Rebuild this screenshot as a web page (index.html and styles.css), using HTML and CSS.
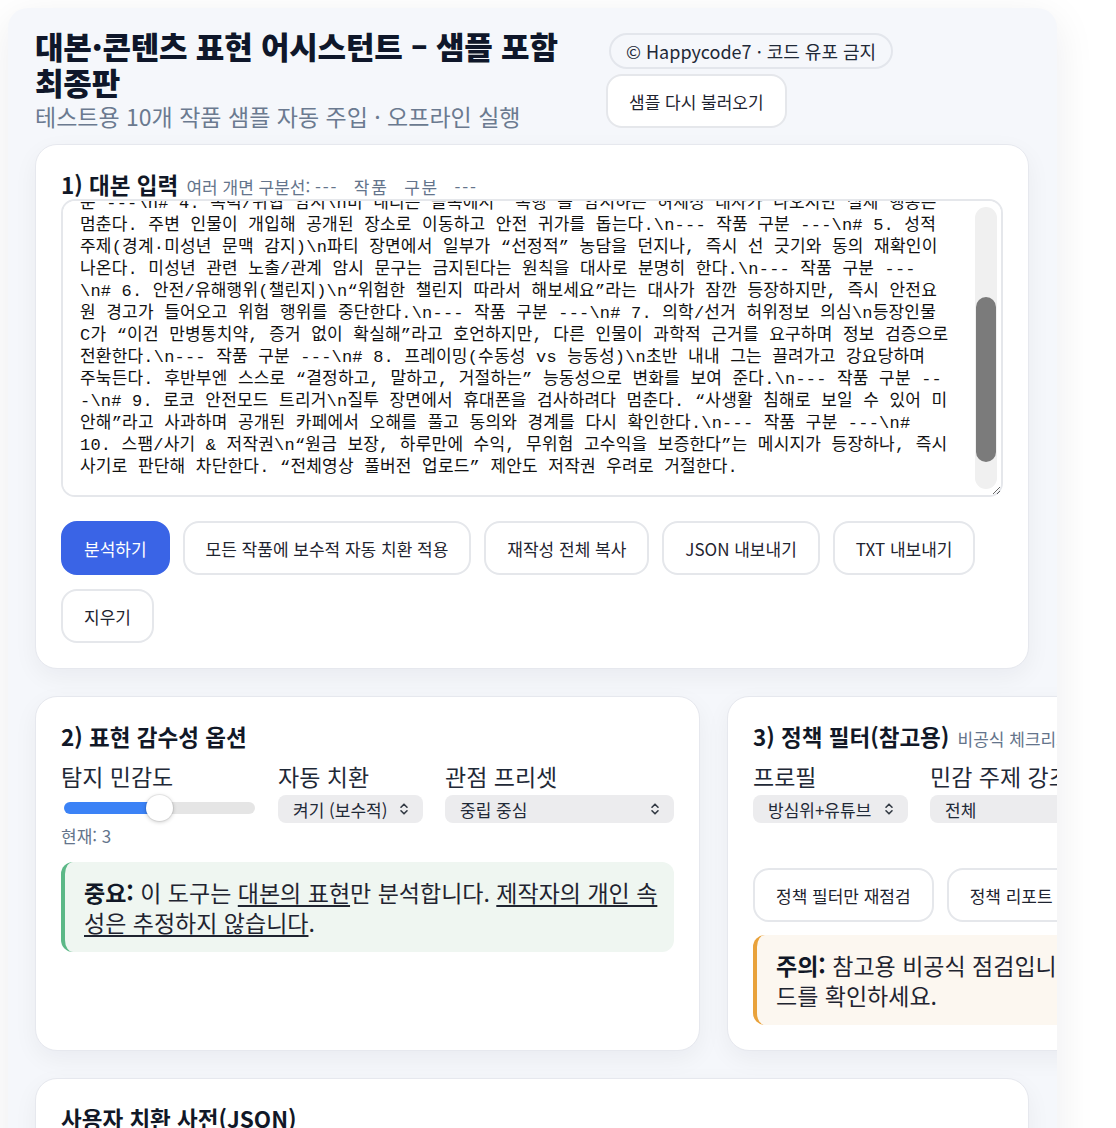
FILE: index.html
```html
<!DOCTYPE html>
<html lang="ko">
<head>
<meta charset="utf-8">
<title>대본·콘텐츠 표현 어시스턴트 – 샘플 포함 최종판</title>
<link rel="stylesheet" href="styles.css">
</head>
<body>
<div class="app">
  <header class="top">
    <div class="title-block">
      <h1>대본·콘텐츠 표현 어시스턴트 – 샘플 포함 최종판</h1>
      <p class="sub">테스트용 10개 작품 샘플 자동 주입 · 오프라인 실행</p>
    </div>
    <div class="top-actions">
      <span class="pill">© Happycode7 · 코드 유포 금지</span>
      <button class="btn">샘플 다시 불러오기</button>
    </div>
  </header>

  <section class="card card-input">
    <h2>1) 대본 입력 <small>여러 개면 구분선: <span class="sep">--- 작품 구분 ---</span></small></h2>
    <div class="ta-wrap">
      <textarea id="script" class="script-input" wrap="off" spellcheck="false"># 1. 혐오/차별 표현\n회의실 장면에서 한 인물이 특정 지역 출신을 비하하는 농담을 던지자, 동료가 “그 말은
불편하다”고 즉시 선을 긋는다. 장면은 사과와 관계 회복으로 마무리된다.\n--- 작품 구분 ---\n# 2.
욕설/비속어 수위\n경기 직후 라커룸에서 선수가 거친 욕설을 내뱉지만, 감독이 “말 조심해”라고 제지하
고 팀은 차분하게 경기 내용을 복기한다.\n--- 작품 구분 ---\n# 3. 자해/자살 암시(보호 장치)\n
새벽 옥상 장면에서 주인공이 “다 끝내고 싶다”고 말하자, 친구가 곁에 앉아 이야기를 들어주고 상담
전화 번호를 안내한다. 장면 말미에 도움 요청의 중요성이 자막으로 제시된다.\n--- 작품 구
분 ---\n# 4. 폭력/위협 암시\n비 내리는 골목에서 “폭행”을 암시하는 허세성 대사가 나오지만 실제 행동은
멈춘다. 주변 인물이 개입해 공개된 장소로 이동하고 안전 귀가를 돕는다.\n--- 작품 구분 ---\n# 5. 성적
주제(경계·미성년 문맥 감지)\n파티 장면에서 일부가 “선정적” 농담을 던지나, 즉시 선 긋기와 동의 재확인이
나온다. 미성년 관련 노출/관계 암시 문구는 금지된다는 원칙을 대사로 분명히 한다.\n--- 작품 구분 ---
\n# 6. 안전/유해행위(챌린지)\n“위험한 챌린지 따라서 해보세요”라는 대사가 잠깐 등장하지만, 즉시 안전요
원 경고가 들어오고 위험 행위를 중단한다.\n--- 작품 구분 ---\n# 7. 의학/선거 허위정보 의심\n등장인물
C가 “이건 만병통치약, 증거 없이 확실해”라고 호언하지만, 다른 인물이 과학적 근거를 요구하며 정보 검증으로
전환한다.\n--- 작품 구분 ---\n# 8. 프레이밍(수동성 vs 능동성)\n초반 내내 그는 끌려가고 강요당하며
주눅든다. 후반부엔 스스로 “결정하고, 말하고, 거절하는” 능동성으로 변화를 보여 준다.\n--- 작품 구분 --
-\n# 9. 로코 안전모드 트리거\n질투 장면에서 휴대폰을 검사하려다 멈춘다. “사생활 침해로 보일 수 있어 미
안해”라고 사과하며 공개된 카페에서 오해를 풀고 동의와 경계를 다시 확인한다.\n--- 작품 구분 ---\n#
10. 스팸/사기 &amp; 저작권\n“원금 보장, 하루만에 수익, 무위험 고수익을 보증한다”는 메시지가 등장하나, 즉시
사기로 판단해 차단한다. “전체영상 풀버전 업로드” 제안도 저작권 우려로 거절한다.


</textarea>
      <div class="scroll-track" aria-hidden="true"><div class="scroll-thumb"></div></div>
    </div>
    <div class="actions">
      <button class="btn primary">분석하기</button>
      <button class="btn">모든 작품에 보수적 자동 치환 적용</button>
      <button class="btn">재작성 전체 복사</button>
      <button class="btn">JSON 내보내기</button>
      <button class="btn">TXT 내보내기</button>
      <button class="btn">지우기</button>
    </div>
  </section>

  <div class="grid">
    <section class="card">
      <h2>2) 표현 감수성 옵션</h2>
      <div class="fields opts">
        <div class="field">
          <label class="lbl" for="sens">탐지 민감도</label>
          <input id="sens" class="range" type="range" min="1" max="5" value="3">
          <div class="current">현재: 3</div>
        </div>
        <div class="field">
          <label class="lbl" for="auto">자동 치환</label>
          <span class="select">
            <select id="auto"><option>켜기 (보수적)</option><option>끄기</option></select>
            <svg class="chev" viewBox="0 0 10 14" aria-hidden="true"><path d="M2 5.2 5 2.2 8 5.2M2 8.8 5 11.8 8 8.8"/></svg>
          </span>
        </div>
        <div class="field">
          <label class="lbl" for="preset">관점 프리셋</label>
          <span class="select">
            <select id="preset"><option>중립 중심</option><option>보수적</option></select>
            <svg class="chev" viewBox="0 0 10 14" aria-hidden="true"><path d="M2 5.2 5 2.2 8 5.2M2 8.8 5 11.8 8 8.8"/></svg>
          </span>
        </div>
      </div>
      <div class="note ok"><b>중요:</b> 이 도구는 <u>대본의 표현</u>만 분석합니다. <u>제작자의 개인 속성은 추정하지 않습니다</u>.</div>
    </section>

    <section class="card">
      <h2>3) 정책 필터(참고용) <small>비공식 체크리스트</small></h2>
      <div class="fields policy">
        <div class="field">
          <label class="lbl" for="profile">프로필</label>
          <span class="select">
            <select id="profile"><option>방심위+유튜브</option><option>유튜브</option><option>방심위</option></select>
            <svg class="chev" viewBox="0 0 10 14" aria-hidden="true"><path d="M2 5.2 5 2.2 8 5.2M2 8.8 5 11.8 8 8.8"/></svg>
          </span>
        </div>
        <div class="field">
          <label class="lbl" for="topic">민감 주제 강조</label>
          <span class="select">
            <select id="topic"><option>전체</option><option>폭력</option></select>
            <svg class="chev" viewBox="0 0 10 14" aria-hidden="true"><path d="M2 5.2 5 2.2 8 5.2M2 8.8 5 11.8 8 8.8"/></svg>
          </span>
        </div>
      </div>
      <div class="actions policy-actions">
        <button class="btn">정책 필터만 재점검</button>
        <button class="btn">정책 리포트 복사</button>
      </div>
      <div class="note warn"><b>주의:</b> 참고용 비공식 점검입니다. 업로드 전 플랫폼 공식 가이드를 확인하세요.</div>
    </section>
  </div>

  <section class="card card-dict">
    <h2>사용자 치환 사전(JSON)</h2>
  </section>
</div>
<script src="script.js"></script>
</body>
</html>
```

FILE: styles.css
```css
* { box-sizing: border-box; }

html, body {
  margin: 0;
  background: #ffffff;
}

body {
  font-family: "Noto Sans CJK KR", "Noto Sans", sans-serif;
  color: #111827;
}

.app {
  width: 1049px;
  margin: 8px 0 0 8px;
  padding: 20px 28px 40px 27px;
  background: #f5f7fb;
  border-radius: 20px;
  box-shadow: 0 10px 40px rgba(15, 23, 42, 0.08);
  overflow: hidden;
}

/* header */
.top {
  display: flex;
  align-items: flex-start;
  gap: 23px;
  margin-bottom: 13px;
}

.title-block { flex: 0 0 548px; }

h1 {
  margin: 0;
  font-size: 31px;
  line-height: 36px;
  font-weight: 900;
  color: #0f172a;
  letter-spacing: -0.2px;
}

.sub {
  margin: 1px 0 0;
  font-size: 23px;
  line-height: 30px;
  color: #6b7a90;
}

.top-actions {
  display: flex;
  flex-direction: column;
  align-items: flex-start;
  gap: 5px;
  padding-top: 5px;
}

.pill {
  display: inline-flex;
  align-items: center;
  height: 36px;
  margin-left: 3px;
  padding: 0 15px;
  border: 2px solid #e3e6ec;
  border-radius: 999px;
  background: #f5f7fb;
  font-size: 18px;
  color: #1f2937;
}

.btn {
  height: 54px;
  padding: 0 21px;
  border: 2px solid #e5e7eb;
  border-radius: 16px;
  background: #ffffff;
  font-family: inherit;
  font-size: 17px;
  color: #1f2430;
  cursor: pointer;
}

.btn.primary {
  background: #3a64e6;
  border-color: #3a64e6;
  color: #ffffff;
}

/* cards */
.card {
  background: #ffffff;
  border: 1px solid #e6e8ee;
  border-radius: 22px;
  padding: 26px 25px 25px;
  box-shadow: 0 8px 24px rgba(15, 23, 42, 0.05);
}

h2 {
  margin: 0;
  font-size: 22.5px;
  line-height: 26px;
  font-weight: 700;
  color: #111827;
}

h2 small {
  font-size: 17px;
  line-height: 1;
  font-weight: 400;
  color: #64748b;
  margin-left: 2px;
}

.sep {
  white-space: pre;
  word-spacing: 9px;
  letter-spacing: 1.8px;
}

.card-input h2 { margin-bottom: 2px; }

.ta-wrap { position: relative; }

.script-input {
  display: block;
  width: 100%;
  height: 298px;
  padding: 16px 36px 16px 17px;
  border: 2px solid #e5e7eb;
  border-radius: 14px;
  background: #ffffff;
  font-family: "Liberation Mono", "Noto Sans CJK KR", monospace;
  font-size: 17px;
  line-height: 22px;
  letter-spacing: 0.2px;
  color: #111111;
  white-space: pre;
  overflow-x: hidden;
  overflow-y: scroll;
  outline: none;
}

.scroll-track {
  position: absolute;
  right: 6px;
  top: 8px;
  bottom: 8px;
  width: 22px;
  border-radius: 11px;
  background: #f0f0f0;
  pointer-events: none;
}
.scroll-thumb {
  position: absolute;
  left: 1px;
  right: 1px;
  top: 90px;
  height: 165px;
  border-radius: 10px;
  background: #7b7b7b;
}

.actions {
  display: flex;
  flex-wrap: wrap;
  gap: 14px 13px;
  margin-top: 24px;
}

/* grid */
.grid {
  display: grid;
  grid-template-columns: 665px 665px;
  gap: 27px;
  margin-top: 27px;
}

.fields {
  display: grid;
  column-gap: 22px;
  margin-top: 13px;
}
.fields.opts { grid-template-columns: 195px auto 1fr; }
.fields.policy { grid-template-columns: auto 1fr; }

.lbl {
  display: block;
  font-size: 23px;
  line-height: 28px;
  color: #1f2937;
  margin-bottom: 5px;
  white-space: nowrap;
}

.range {
  -webkit-appearance: none;
  appearance: none;
  display: block;
  width: 191px;
  height: 26px;
  margin: 0 0 0 3px;
  background: transparent;
}
.range::-webkit-slider-runnable-track {
  height: 12px;
  border-radius: 6px;
  background: linear-gradient(to right, #3b82f6 0 47%, #e5e5e5 47% 100%);
}
.range::-webkit-slider-thumb {
  -webkit-appearance: none;
  width: 27px;
  height: 26px;
  margin-top: -7px;
  border-radius: 50%;
  background: #ffffff;
  box-shadow: 0 0 0 1px rgba(0, 0, 0, 0.06), 0 1px 4px rgba(0, 0, 0, 0.22);
}

.current {
  margin-top: 5px;
  font-size: 17px;
  line-height: 20px;
  color: #64748b;
}

.select {
  position: relative;
  display: block;
}
.select select {
  -webkit-appearance: none;
  appearance: none;
  display: block;
  width: 100%;
  height: 28px;
  padding: 0 36px 0 15px;
  border: 0;
  border-radius: 8px;
  background: #ececee;
  font-family: inherit;
  font-size: 17px;
  color: #1f2937;
}
.select .chev {
  position: absolute;
  right: 14px;
  top: 7px;
  width: 10px;
  height: 14px;
  fill: none;
  stroke: #333a44;
  stroke-width: 1.6;
  stroke-linecap: round;
  stroke-linejoin: round;
  pointer-events: none;
}

.note {
  margin-top: 16px;
  padding: 15px 10px 15px 19px;
  border-radius: 12px;
  font-size: 23px;
  line-height: 30px;
  color: #1f2430;
}
.note b { font-weight: 700; color: #111827; }
.note u { text-underline-offset: 3px; text-decoration-thickness: 1.5px; }
.note.ok {
  background: #eff6f1;
  border-left: 4px solid #5cb887;
}
.note.warn {
  margin-top: 13px;
  background: #fcf7f0;
  border-left: 4px solid #e9a23b;
}

.policy-actions { margin-top: 45px; }

.card-dict {
  margin-top: 27px;
  height: 200px;
}
```

FILE: script.js
```js
document.getElementById('script').scrollTop = 156;
```
